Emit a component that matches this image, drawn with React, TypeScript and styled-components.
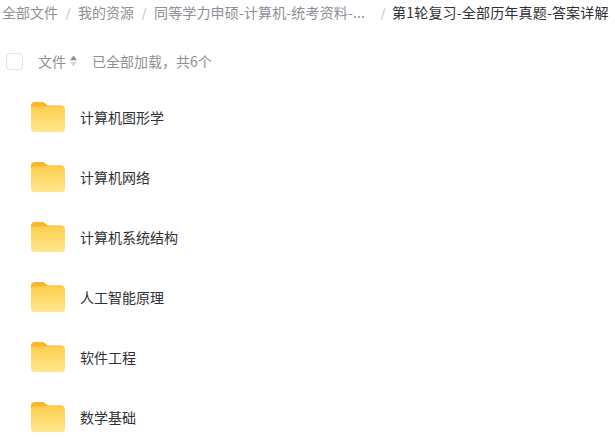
import React from 'react';
import styled, { createGlobalStyle } from 'styled-components';

const GlobalStyle = createGlobalStyle`
  html, body {
    margin: 0;
    padding: 0;
    background: #fff;
    overflow: hidden;
  }
  body {
    font-family: "Noto Sans CJK SC", "Liberation Sans", sans-serif;
  }
`;

const crumbs = ['全部文件', '我的资源'];
const folders = ['计算机图形学', '计算机网络', '计算机系统结构', '人工智能原理', '软件工程', '数学基础'];

const FolderIcon = () => (
  <svg width="36" height="32" viewBox="0 0 36 32">
    <defs>
      <linearGradient id="folderFront" x1="0" y1="0" x2="0" y2="1">
        <stop offset="0" stopColor="#ffcf4d" />
        <stop offset="1" stopColor="#ffe78e" />
      </linearGradient>
    </defs>
    <path d="M1 4.500C1 2.300 2.600 1 4.600 1h7.600c1.400 0 2.400.6 3.200 1.600L17.600 4.500H31c2.200 0 4 1.800 4 4v4H1z" fill="#fdb62c" />
    <rect x="1" y="5.500" width="34" height="25.500" rx="3.500" fill="url(#folderFront)" />
  </svg>
);

const SortIcon = () => (
  <svg width="7" height="12" viewBox="0 0 7 12">
    <path d="M3.500 0.500L6.900 5.200H0.100z" fill="#8a8f99" />
    <path d="M3.500 11.500L6.900 6.800H0.100z" fill="#d3d6db" />
  </svg>
);

export default function App() {
  return (
    <Page>
      <GlobalStyle />
      <Breadcrumb>
        {crumbs.map((c) => (
          <React.Fragment key={c}>
            <Crumb>{c}</Crumb>
            <Slash>/</Slash>
          </React.Fragment>
        ))}
        <TruncatedCrumb>同等学力申硕-计算机-统考资料-...</TruncatedCrumb>
        <LastSlash>/</LastSlash>
        <Current>第1轮复习-全部历年真题-答案详解</Current>
      </Breadcrumb>
      <Toolbar>
        <Checkbox />
        <SortLabel>
          文件
          <SortIcon />
        </SortLabel>
        <Count>已全部加载，共6个</Count>
      </Toolbar>
      <List>
        {folders.map((name) => (
          <Row key={name}>
            <FolderIcon />
            <Name>{name}</Name>
          </Row>
        ))}
      </List>
    </Page>
  );
}

const Page = styled.div`
  width: 615px;
  height: 437px;
  overflow: hidden;
  padding-top: 2px;
  box-sizing: border-box;
`;

const Breadcrumb = styled.div`
  display: flex;
  align-items: center;
  height: 20px;
  padding-left: 2px;
  font-size: 14px;
  white-space: nowrap;
`;

const Crumb = styled.span`
  color: #8d9097;
`;

const TruncatedCrumb = styled(Crumb)`
  letter-spacing: 0.15px;
`;

const Slash = styled.span`
  width: 20px;
  text-align: center;
  color: #b4b7bd;
  font-size: 12px;
`;

const LastSlash = styled(Slash)`
  margin-left: 8px;
  margin-right: -1px;
`;

const Current = styled.span`
  color: #303136;
  letter-spacing: 0.18px;
`;

const Toolbar = styled.div`
  display: flex;
  align-items: center;
  height: 20px;
  margin-top: 29px;
  padding-left: 6px;
  font-size: 14px;
`;

const Checkbox = styled.span`
  width: 15px;
  height: 15px;
  border: 1px solid #dfe1e5;
  border-radius: 4px;
`;

const SortLabel = styled.span`
  display: flex;
  align-items: center;
  gap: 4px;
  margin-left: 15px;
  color: #8d9097;
`;

const Count = styled.span`
  margin-left: 15px;
  color: #8d9097;
`;

const List = styled.div`
  display: flex;
  flex-direction: column;
  margin-top: 16px;
`;

const Row = styled.div`
  display: flex;
  align-items: center;
  height: 60px;
  padding-left: 30px;
`;

const Name = styled.span`
  margin-left: 14px;
  font-size: 14px;
  color: #303136;
`;
